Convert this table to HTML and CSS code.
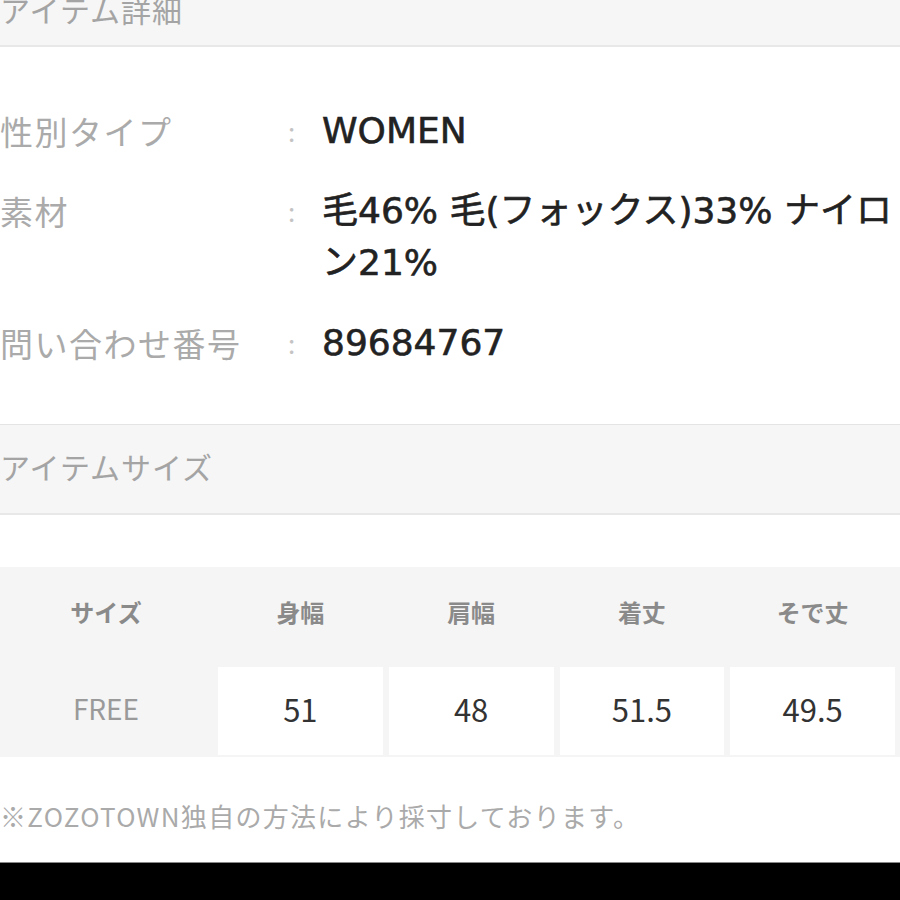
FILE: index.html
```html
<!DOCTYPE html>
<html lang="ja">
<head>
    <meta charset="UTF-8">
    <title>アイテム詳細</title>
    <link rel="stylesheet" href="styles.css">
</head>
<body>
<div class="page">
    <div class="sectionHead firstHead">アイテム詳細</div>

    <div class="detail">
        <div class="detailRow">
            <div class="label">性別タイプ</div>
            <div class="colon">:</div>
            <div class="value">WOMEN</div>
        </div>
        <div class="detailRow">
            <div class="label">素材</div>
            <div class="colon">:</div>
            <div class="value">毛46% 毛(フォックス)33% ナイロン21%</div>
        </div>
        <div class="detailRow">
            <div class="label">問い合わせ番号</div>
            <div class="colon">:</div>
            <div class="value">89684767</div>
        </div>
    </div>

    <div class="sectionHead">アイテムサイズ</div>

    <div class="sizeTable">
        <div class="th">サイズ</div>
        <div class="th">身幅</div>
        <div class="th">肩幅</div>
        <div class="th">着丈</div>
        <div class="th">そで丈</div>

        <div class="sizeName">FREE</div>
        <div class="td">51</div>
        <div class="td">48</div>
        <div class="td">51.5</div>
        <div class="td">49.5</div>
    </div>

    <p class="note">※ZOZOTOWN独自の方法により採寸しております。</p>
</div>
<div class="bottomBar"></div>
</body>
</html>
```

FILE: styles.css
```css
body {
    margin: 0;
    background: #fff;
    font-family: "Noto Sans CJK JP", "Noto Sans", sans-serif;
    overflow: hidden;
    height: 900px;
    display: flex;
    flex-direction: column;
}

.page {
    margin-top: -44px;
    flex: 1;
}

.sectionHead {
    height: 82px;
    line-height: 82px;
    padding-bottom: 6px;
    background: #f6f6f6;
    border-top: 1px solid #e4e4e4;
    border-bottom: 2px solid #e8e8e8;
    color: #a4a4a4;
    font-size: 30px;
    letter-spacing: 1px;
}
.firstHead {
    height: 74px;
    line-height: 76px;
    padding: 14px 0 0 0;
}

.detail {
    padding: 58px 0 55px 0;
}

.detailRow {
    display: flex;
    margin-bottom: 28px;
}
.detailRow:last-child {
    margin-bottom: 0;
}

.label {
    width: 288px;
    color: #aaa;
    font-size: 33px;
    letter-spacing: 1.5px;
    line-height: 52px;
}

.colon {
    width: 34px;
    color: #c4c4c4;
    font-size: 26px;
    line-height: 52px;
}

.value {
    width: 578px;
    color: #222;
    font-family: "DejaVu Sans", "Noto Sans CJK JP", sans-serif;
    font-size: 36px;
    line-height: 52px;
    -webkit-text-stroke: 0.6px #222;
}

.sizeTable {
    margin-top: 52px;
    background: #f5f5f5;
    display: grid;
    grid-template-columns: 212px repeat(4, 1fr);
    grid-template-rows: 100px 88px;
    column-gap: 6px;
    padding-right: 5px;
    padding-bottom: 2px;
}

.th {
    display: flex;
    align-items: center;
    justify-content: center;
    padding-bottom: 12px;
    color: #8a8a8a;
    font-size: 24px;
    font-weight: 700;
}

.sizeName {
    display: flex;
    align-items: center;
    justify-content: center;
    padding-bottom: 6px;
    color: #9a9a9a;
    font-size: 28px;
}

.td {
    display: flex;
    align-items: center;
    justify-content: center;
    padding-bottom: 6px;
    background: #fff;
    color: #333;
    font-size: 31px;
}

.note {
    margin: 40px 0 0 0;
    color: #aaa;
    font-size: 26px;
    letter-spacing: 1.3px;
}

.bottomBar {
    height: 37px;
    background: #000;
    border-top: 1px solid #888;
}
```
